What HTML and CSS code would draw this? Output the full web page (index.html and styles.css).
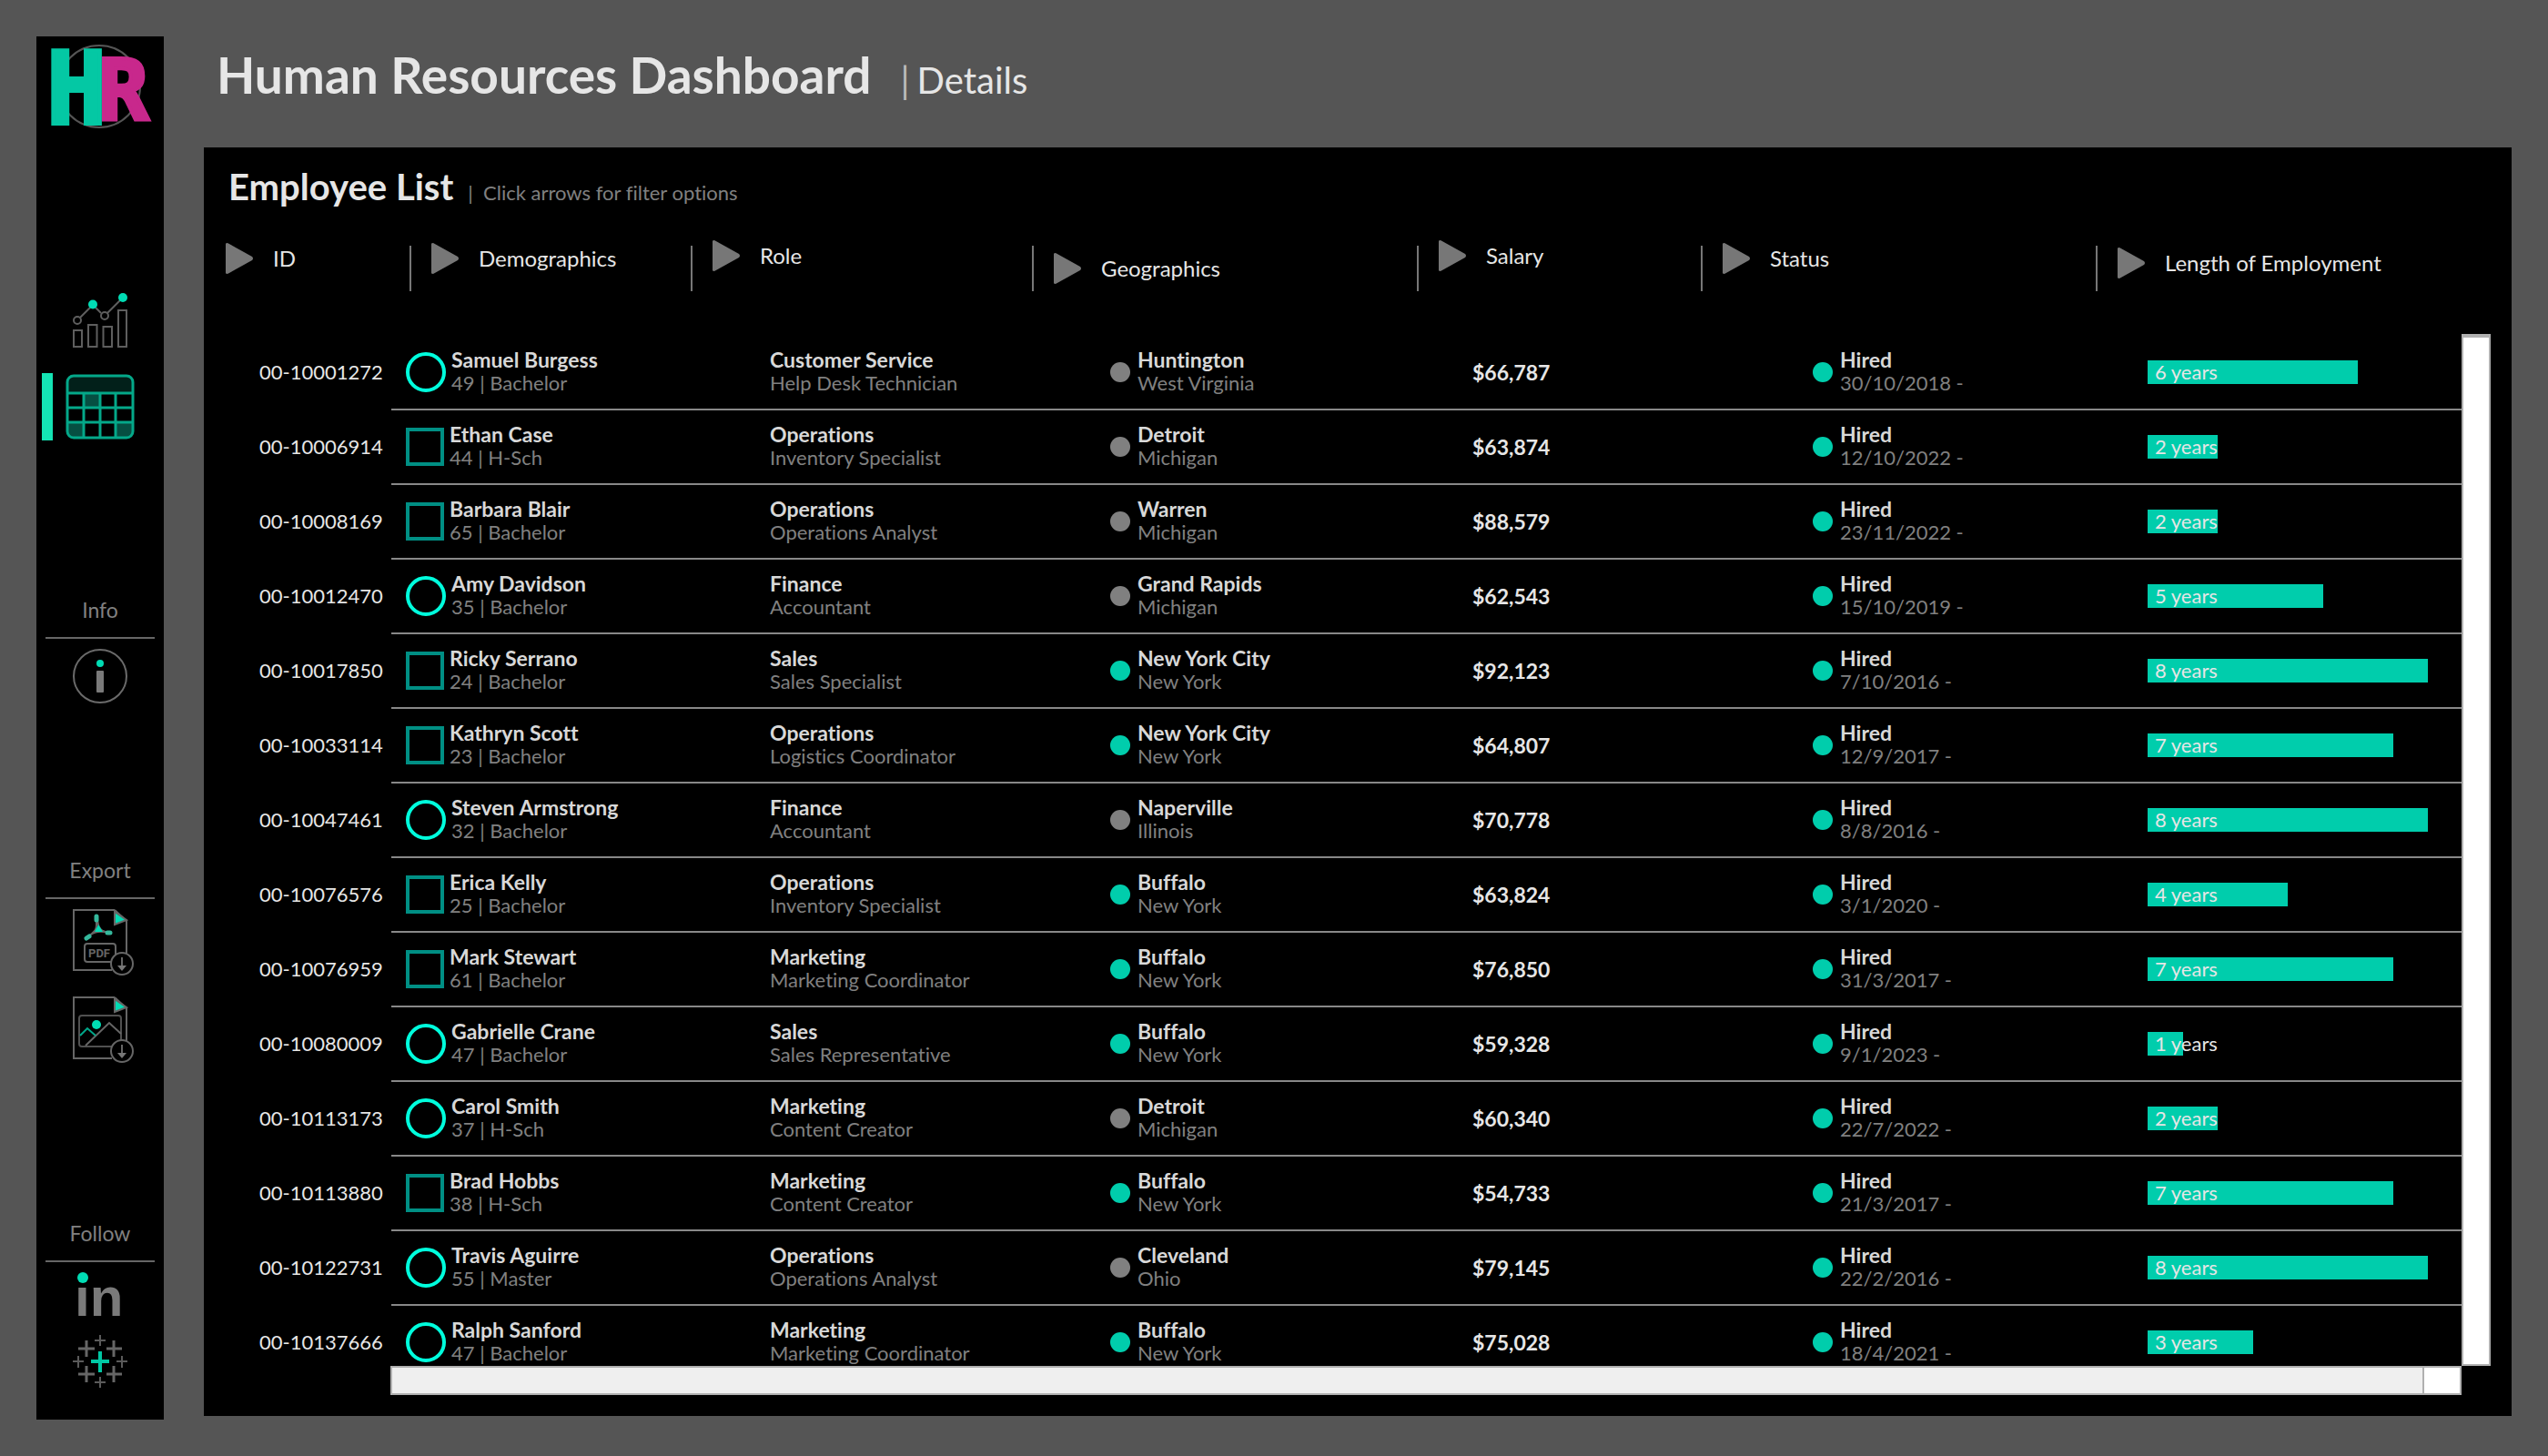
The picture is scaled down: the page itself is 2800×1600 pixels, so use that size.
FILE: index.html
```html
<!DOCTYPE html>
<html lang="en">
<head>
<meta charset="utf-8">
<title>Human Resources Dashboard</title>
<link rel="stylesheet" href="styles.css">
</head>
<body>
<div class="app">
  <nav class="sidebar" aria-label="Main">
    <svg class="logo" viewBox="0 0 140 94" role="img" aria-label="HR">
      <circle cx="69" cy="47" r="45" fill="none" stroke="#555" stroke-width="2"/>
      <text class="logo-r" x="68" y="84">R</text>
      <text class="logo-h" x="11" y="88">H</text>
    </svg>

    <div class="views">
      <a class="view" href="#summary" aria-label="Summary">
        <svg width="60" height="60" viewBox="0 0 60 60" fill="none" stroke="#5e5e5e" stroke-width="2">
          <path d="M1 41h9v18H1zM17 35h9.500v24H17zM33.500 37H43v22h-9.500zM50 19h9v40h-9z"/>
          <path d="M8 27L20 15M25 16L31 22M38 22L53 7"/>
          <circle cx="5" cy="30" r="4"/><circle cx="35" cy="25" r="4"/>
          <circle cx="22" cy="12.500" r="5" fill="#00dcb4" stroke="none"/><circle cx="55" cy="5" r="5" fill="#00dcb4" stroke="none"/>
        </svg>
      </a>
      <a class="view view-active" href="#details" aria-label="Details" aria-current="page">
        <svg width="76" height="72" viewBox="0 0 76 72" fill="none" stroke="#04a889" stroke-width="3">
          <path d="M3 21V9a6 6 0 0 1 6-6h58a6 6 0 0 1 6 6v12z" fill="#02201a" stroke="none"/>
          <path d="M20 21h17v16H20zM3 53h17v16H3zM56 53h17v16H56z" fill="#064f42" stroke="none"/>
          <rect x="2" y="2" width="72" height="68" rx="7"/>
          <path d="M2 21h72M2 37h72M2 53h72M20 21v49M38 21v49M55 21v49"/>
        </svg>
      </a>
    </div>

    <section class="group group-info">
      <h2 class="group-title">Info</h2>
      <button class="icon-button" type="button" aria-label="Information">
        <svg width="60" height="60" viewBox="0 0 60 60">
          <circle cx="30" cy="30" r="29" fill="none" stroke="#6a6a6a" stroke-width="2"/>
          <circle cx="30" cy="16" r="4" fill="#00dcb4"/>
          <rect x="26" y="24" width="8" height="24" rx="1" fill="#7a7a7a"/>
        </svg>
      </button>
    </section>

    <section class="group group-export">
      <h2 class="group-title">Export</h2>
      <button class="icon-button" type="button" aria-label="Export as PDF">
        <svg width="80" height="73" viewBox="-10 0 80 73" fill="none" stroke="#666" stroke-width="2">
          <path d="M46 1H1v66h42M46 1l13 12v36"/>
          <path d="M46 3v14l13-5z" fill="#00dcb4"/>
          <path d="M26 8c-1 14 4 12-11 24M27 8c0 14 4 17 15 18M17 30c7-6 14-6 24-4"/>
          <path d="M26 8v4M15 32l3-2M38 26h3" stroke="#35b89c" stroke-width="5" stroke-linecap="round"/>
          <path d="M28 17l5 8h-9z" fill="#00dcb4" stroke="none"/>
          <rect x="13" y="38" width="34" height="20" rx="3"/>
          <text class="pdf" x="17" y="53">PDF</text>
          <circle cx="54" cy="60" r="12" fill="#000"/>
          <path d="M54 53v12"/><path d="M49 62h10l-5 6z" fill="#777" stroke="none"/>
        </svg>
      </button>
      <button class="icon-button icon-image" type="button" aria-label="Export as image">
        <svg width="80" height="74" viewBox="-10 0 80 74" fill="none" stroke="#666" stroke-width="2">
          <path d="M46 1H1v67h42M46 1l13 12v36"/>
          <path d="M46 3v14l13-5z" fill="#00dcb4"/>
          <rect x="7" y="21" width="46" height="34" rx="3" stroke="#505050"/>
          <path d="M14 54l26-25 13 12"/>
          <path d="M8 43l8-8 9 8" stroke="#00a88a"/>
          <circle cx="26" cy="31" r="5" fill="#00dcb4" stroke="none"/>
          <circle cx="54" cy="60" r="12" fill="#000"/>
          <path d="M54 53v12"/><path d="M49 62h10l-5 6z" fill="#777" stroke="none"/>
        </svg>
      </button>
    </section>

    <section class="group group-follow">
      <h2 class="group-title">Follow</h2>
      <a class="icon-button" href="#linkedin" aria-label="LinkedIn">
        <svg width="60" height="50" viewBox="0 0 60 50">
          <text class="linkedin" x="2" y="48">ın</text>
          <circle cx="11" cy="6" r="6" fill="#00dcb4"/>
        </svg>
      </a>
      <a class="icon-button icon-tableau" href="#tableau" aria-label="Tableau">
        <svg width="60" height="60" viewBox="0 0 60 60" fill="none" stroke="#666" stroke-width="3">
          <path d="M30 19v23M20 30h20" stroke="#00c8a4" stroke-width="4"/>
          <path d="M15 7v18M6 16h18M45 7v18M37 16h17M15 35v18M6 44h18M45 35v18M37 44h17"/>
          <path d="M30 1v12M24 7h12M30 47v12M24 53h12M6 24v13M0 30h12M54 24v13M48 30h12" stroke="#5a5a5a" stroke-width="2"/>
        </svg>
      </a>
    </section>
  </nav>

  <main class="main">
    <header class="page-header">
      <h1 class="page-title">Human Resources Dashboard</h1>
      <p class="page-sub"><span class="bar-sep">|</span>Details</p>
    </header>

    <section class="panel">
      <header class="panel-header">
        <h2 class="panel-title">Employee List</h2>
        <p class="panel-hint">|&nbsp; Click arrows for filter options</p>
      </header>
      <div class="viewport">
        <div class="table-view">
          <table class="employees">
            <colgroup>
              <col class="col-id"><col class="col-demographics"><col class="col-role"><col class="col-geographics"><col class="col-salary"><col class="col-status"><col class="col-length">
            </colgroup>
            <thead><tr id="head"></tr></thead>
            <tbody id="rows"></tbody>
          </table>
        </div>
        <div class="scroll-y"></div>
        <div class="scroll-x"><div class="thumb-x"></div></div>
      </div>
    </section>
  </main>
</div>
<script src="app.js"></script>
</body>
</html>
```
FILE: styles.css
```css
* { box-sizing: border-box; }

body {
  margin: 0;
  background: #555;
  color: #e6e6e6;
  font: 22px/26px Lato, "Open Sans", sans-serif;
  font-variant-ligatures: none;
}

h1, h2, p { margin: 0; }

button {
  padding: 0;
  border: 0;
  background: none;
  color: inherit;
  font: inherit;
  cursor: pointer;
}

svg { display: block; overflow: visible; }

.app {
  display: flex;
  gap: 44px;
  height: 100vh;
  min-height: 1600px;
  padding: 40px;
}

/* Sidebar */
.sidebar {
  display: flex;
  flex-direction: column;
  flex: none;
  width: 140px;
  background: #000;
}

.logo { width: 140px; height: 94px; margin-top: 8px; }
.logo-h, .logo-r {
  font-family: "DejaVu Sans Mono", monospace;
  font-weight: 700;
  stroke-width: 4px;
}
.logo-h { font-size: 110px; fill: #04c8a4; stroke: #04c8a4; }
.logo-r { font-size: 92px; fill: #c8288c; stroke: #c8288c; }

.views { display: flex; flex-direction: column; gap: 28px; margin-top: 180px; }
.view { display: flex; align-items: center; justify-content: center; }
.view-active {
  padding-left: 6px;
  padding-right: 32px;
  justify-content: space-between;
}
.view-active::before { content: ""; width: 12px; height: 74px; background: #14e4b4; }

.group { display: flex; flex-direction: column; align-items: center; }
.group-info, .group-follow { margin-top: 170px; }
.group-export { margin-top: 167px; }
.group-title {
  width: 120px;
  margin-bottom: 11px;
  padding-bottom: 14px;
  border-bottom: 2px solid #666;
  color: #808080;
  font-size: 23px;
  font-weight: 400;
  line-height: 32px;
  text-align: center;
}
.icon-image { margin-top: 23px; }
.icon-tableau { margin-top: 18px; }
.pdf { font: 700 13px Roboto, sans-serif; fill: #666; stroke: none; }
.linkedin { font: 700 60px "Liberation Sans", sans-serif; fill: #7a7a7a; }

/* Main area */
.main { display: flex; flex: 1; flex-direction: column; min-width: 0; }

.page-header {
  display: flex;
  align-items: baseline;
  gap: 32px;
  margin: 6px 0 44px 14px;
}
.page-title { font-size: 55px; font-weight: 700; line-height: 72px; }
.page-sub { font-size: 40px; line-height: 48px; }
.bar-sep { margin-right: 8px; color: #bbb; }

.panel {
  display: flex;
  flex: 1;
  flex-direction: column;
  min-height: 0;
  margin-bottom: 4px;
  padding: 18px 23px 23px 0;
  background: #000;
}
.panel-header {
  display: flex;
  align-items: baseline;
  gap: 16px;
  margin: 0 0 34px 27px;
}
.panel-title { font-size: 40px; font-weight: 700; line-height: 50px; }
.panel-hint { color: #808080; }

.viewport {
  display: grid;
  flex: 1;
  grid-template: minmax(0, 1fr) 32px / minmax(0, 1fr) 32px;
  min-height: 0;
}
.table-view { overflow: hidden; }
.scroll-y {
  margin-top: 103px;
  border: 2px solid #b0b0b0;
  border-top-width: 4px;
  background: #fff;
}
.scroll-x {
  display: flex;
  justify-content: flex-end;
  margin-left: 205px;
  border: 2px solid #b0b0b0;
  background: #efefef;
}
.thumb-x { width: 41px; border-left: 2px solid #b0b0b0; background: #fff; }

/* Employee table */
.employees {
  width: 100%;
  border-spacing: 0;
  table-layout: fixed;
}
.col-id { width: 206px; }
.col-demographics { width: 329px; }
.col-role { width: 375px; }
.col-geographics { width: 423px; }
.col-salary { width: 312px; }
.col-status { width: 434px; }
.col-length { width: 402px; }

.employees th {
  height: 105px;
  padding: 0;
  font-size: 24px;
  font-weight: 400;
  text-align: left;
  vertical-align: top;
}
.head { display: flex; align-items: flex-start; gap: 22px; }
.head-id { padding-left: 24px; }
.head-demographics { padding-left: 20px; }
.head-rule::before { content: ""; width: 2px; height: 50px; margin-top: 6px; background: #777; }
.sort { display: flex; align-items: center; gap: 22px; }
.drop-s { margin-top: 3px; }
.drop-m { margin-top: 8px; }
.drop-l { margin-top: 14px; }
.arrow { fill: #777; }

.employees td { height: 82px; padding: 0; border-bottom: 2px solid #888; white-space: nowrap; }
.employees .id { padding-left: 61px; border-bottom-color: transparent; }
.employees .demographics { padding-left: 16px; }
.employees .role { padding-left: 87px; }
.employees .geographics { padding-left: 86px; }
.employees .salary { padding-left: 61px; font-size: 23px; font-weight: 700; }
.employees .status { padding-left: 123px; }
.employees .length { padding: 0 37px 0 57px; }

.entry { display: flex; align-items: center; }
.ring { width: 44px; height: 44px; margin-right: 6px; border: 4px solid #00ffdd; border-radius: 50%; }
.square { width: 42px; height: 42px; margin-right: 6px; border: 4px solid #008f84; }
.dot { width: 22px; height: 22px; margin-right: 8px; border-radius: 50%; background: #808080; }
.dot-on { background: #00cdac; }
.lines { padding-bottom: 3px; }
.lines strong { display: block; color: #d8d8d8; font-size: 23px; }
.lines span { display: block; color: #808080; }
.years { height: 26px; padding-left: 8px; background: #00cdac; }
```
FILE: app.js
```js
const columns = [
  ['ID', 'head-id', 'drop-s'],
  ['Demographics', 'head-demographics head-rule', 'drop-s'],
  ['Role', 'head-rule', ''],
  ['Geographics', 'head-rule', 'drop-l'],
  ['Salary', 'head-rule', ''],
  ['Status', 'head-rule', 'drop-s'],
  ['Length of Employment', 'head-rule', 'drop-m'],
];

// id, shape, name, age and education, department, job, city, state, local office, salary, hire date, years
const employees = [
  ['00-10001272', 'ring', 'Samuel Burgess', '49 | Bachelor', 'Customer Service', 'Help Desk Technician', 'Huntington', 'West Virginia', 0, '$66,787', '30/10/2018', 6],
  ['00-10006914', 'square', 'Ethan Case', '44 | H-Sch', 'Operations', 'Inventory Specialist', 'Detroit', 'Michigan', 0, '$63,874', '12/10/2022', 2],
  ['00-10008169', 'square', 'Barbara Blair', '65 | Bachelor', 'Operations', 'Operations Analyst', 'Warren', 'Michigan', 0, '$88,579', '23/11/2022', 2],
  ['00-10012470', 'ring', 'Amy Davidson', '35 | Bachelor', 'Finance', 'Accountant', 'Grand Rapids', 'Michigan', 0, '$62,543', '15/10/2019', 5],
  ['00-10017850', 'square', 'Ricky Serrano', '24 | Bachelor', 'Sales', 'Sales Specialist', 'New York City', 'New York', 1, '$92,123', '7/10/2016', 8],
  ['00-10033114', 'square', 'Kathryn Scott', '23 | Bachelor', 'Operations', 'Logistics Coordinator', 'New York City', 'New York', 1, '$64,807', '12/9/2017', 7],
  ['00-10047461', 'ring', 'Steven Armstrong', '32 | Bachelor', 'Finance', 'Accountant', 'Naperville', 'Illinois', 0, '$70,778', '8/8/2016', 8],
  ['00-10076576', 'square', 'Erica Kelly', '25 | Bachelor', 'Operations', 'Inventory Specialist', 'Buffalo', 'New York', 1, '$63,824', '3/1/2020', 4],
  ['00-10076959', 'square', 'Mark Stewart', '61 | Bachelor', 'Marketing', 'Marketing Coordinator', 'Buffalo', 'New York', 1, '$76,850', '31/3/2017', 7],
  ['00-10080009', 'ring', 'Gabrielle Crane', '47 | Bachelor', 'Sales', 'Sales Representative', 'Buffalo', 'New York', 1, '$59,328', '9/1/2023', 1],
  ['00-10113173', 'ring', 'Carol Smith', '37 | H-Sch', 'Marketing', 'Content Creator', 'Detroit', 'Michigan', 0, '$60,340', '22/7/2022', 2],
  ['00-10113880', 'square', 'Brad Hobbs', '38 | H-Sch', 'Marketing', 'Content Creator', 'Buffalo', 'New York', 1, '$54,733', '21/3/2017', 7],
  ['00-10122731', 'ring', 'Travis Aguirre', '55 | Master', 'Operations', 'Operations Analyst', 'Cleveland', 'Ohio', 0, '$79,145', '22/2/2016', 8],
  ['00-10137666', 'ring', 'Ralph Sanford', '47 | Bachelor', 'Marketing', 'Marketing Coordinator', 'Buffalo', 'New York', 1, '$75,028', '18/4/2021', 3],
];

const lines = (top, bottom) => `<div class="lines"><strong>${top}</strong><span>${bottom}</span></div>`;

document.getElementById('head').innerHTML = columns.map(([label, cls, drop]) => `
  <th scope="col"><div class="head ${cls}"><button class="sort ${drop}" type="button">
    <svg class="arrow" width="30" height="34" viewBox="0 0 30 34"><path d="M0 1q0-1 2-1l27 15q2 2 0 4L2 34q-2 0-2-1z"/></svg>${label}
  </button></div></th>`).join('');

document.getElementById('rows').innerHTML = employees.map(
  ([id, shape, name, about, dept, job, city, state, local, salary, hired, years]) => `
  <tr>
    <td class="id">${id}</td>
    <td class="demographics"><div class="entry"><i class="${shape}"></i>${lines(name, about)}</div></td>
    <td class="role">${lines(dept, job)}</td>
    <td class="geographics"><div class="entry"><i class="dot${local ? ' dot-on' : ''}"></i>${lines(city, state)}</div></td>
    <td class="salary">${salary}</td>
    <td class="status"><div class="entry"><i class="dot dot-on"></i>${lines('Hired', hired + ' -')}</div></td>
    <td class="length"><div class="years" style="width:${years * 12.5}%">${years} years</div></td>
  </tr>`).join('');
```
